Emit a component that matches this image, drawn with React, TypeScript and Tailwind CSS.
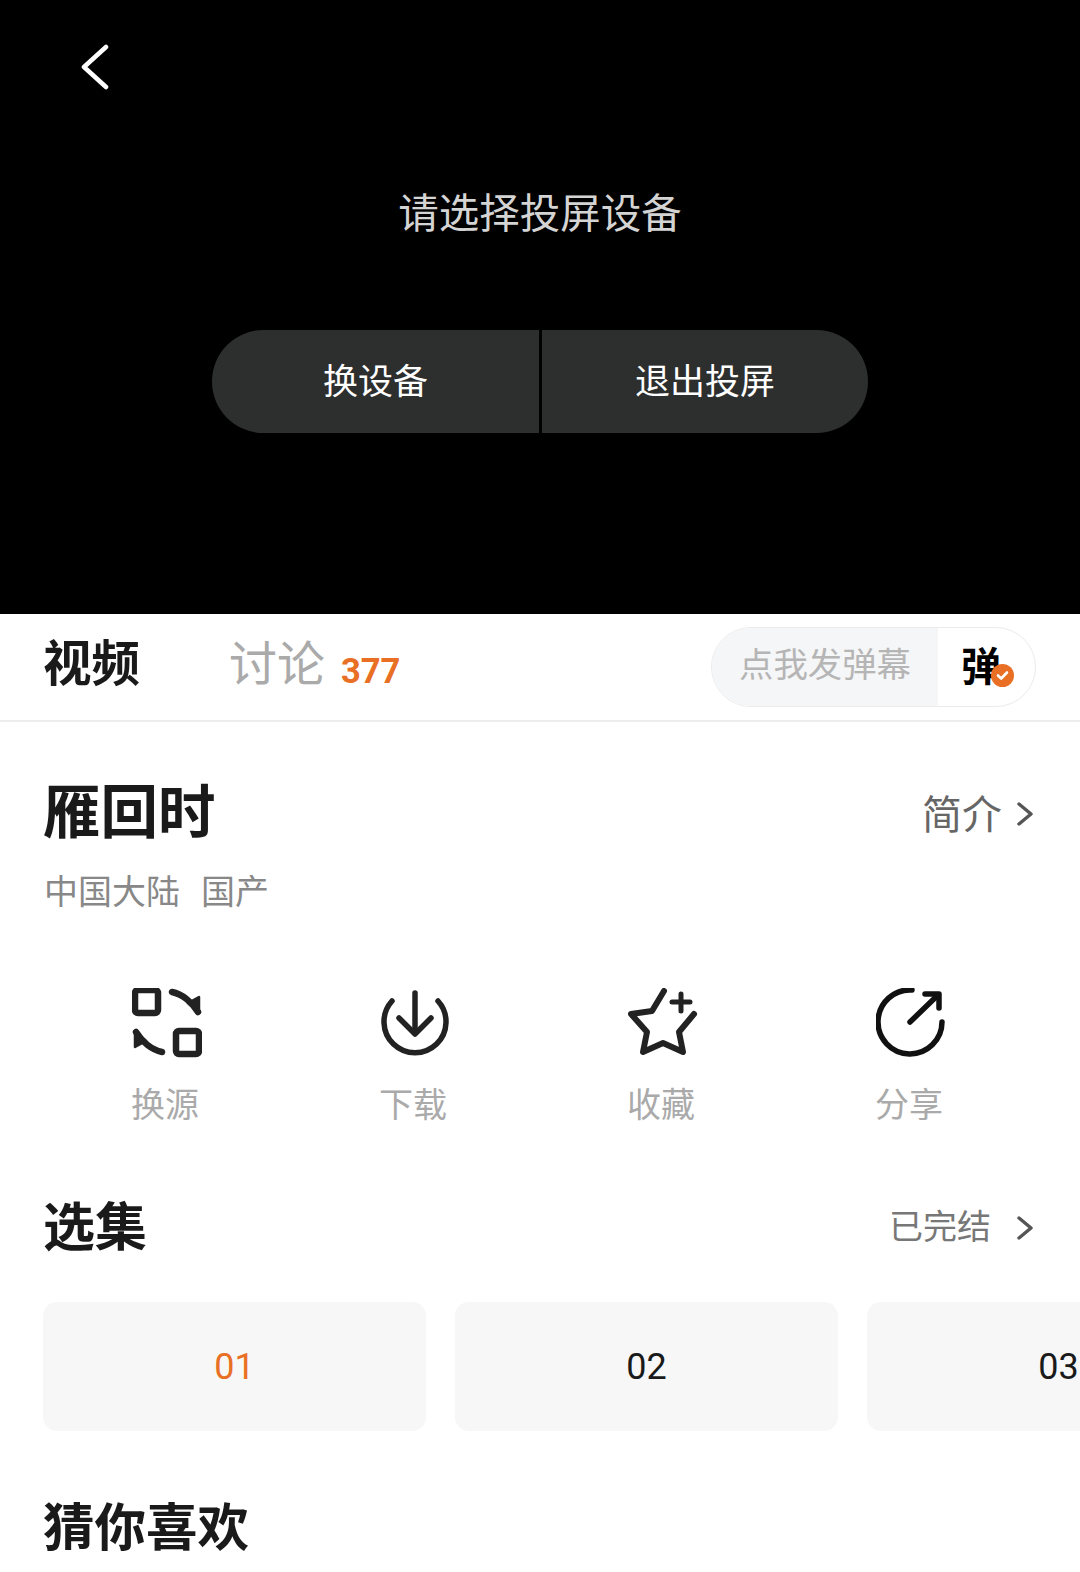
const cjk = "font-['Noto_Sans_CJK_SC','Noto_Sans',sans-serif]";

function Chevron() {
  return (
    <svg width="16" height="24" viewBox="0 0 16 24" fill="none" stroke="#555" strokeWidth="3.4" strokeLinecap="round" strokeLinejoin="round">
      <path d="M2 2 L14 12 L2 22" />
    </svg>
  );
}

function SwapIcon() {
  return (
    <svg width="70" height="70" viewBox="0 1 70 70" fill="none" stroke="#222" strokeWidth="6.5" strokeLinecap="round" strokeLinejoin="round">
      <rect x="3" y="3" width="23" height="23" rx="3" />
      <rect x="44" y="44" width="23" height="23" rx="3" />
      <path d="M40 5 C50 7 60 15 66 25" />
      <path d="M67 10 L67 26 L56 16 Z" fill="#222" strokeWidth="2.5" />
      <path d="M30 65 C20 63 10 55 4 45" />
      <path d="M3 60 L3 44 L14 54 Z" fill="#222" strokeWidth="2.5" />
    </svg>
  );
}

function DownloadIcon() {
  return (
    <svg width="70" height="70" viewBox="0 2 70 70" fill="none" stroke="#222" strokeWidth="5.5" strokeLinecap="round" strokeLinejoin="round">
      <path d="M12 15 A31 31 0 1 0 58 15" />
      <path d="M35 7 L35 47" />
      <path d="M19 32 L35 48 L51 32" />
    </svg>
  );
}

function StarIcon() {
  return (
    <svg width="70" height="70" viewBox="2 3 70 70" fill="none" stroke="#222" strokeWidth="6" strokeLinecap="round" strokeLinejoin="round">
      <path d="M38 6 L26 26 L5 29 L21 47 L17 67 L37 58 L57 67 L53 47 L68 29" />
      <path d="M55 9 L55 26 M46 17 L64 17" strokeWidth="5" />
    </svg>
  );
}

function ShareIcon() {
  return (
    <svg width="70" height="70" viewBox="1 1 70 70" fill="none" stroke="#111" strokeWidth="5.5" strokeLinecap="round" strokeLinejoin="round">
      <path d="M37 3 A32 32 0 1 0 67 35" />
      <path d="M35 35 L63 8" />
      <path d="M50 7 L64 7 L64 21" />
    </svg>
  );
}

const actions = [
  { label: "换源", icon: SwapIcon },
  { label: "下载", icon: DownloadIcon },
  { label: "收藏", icon: StarIcon },
  { label: "分享", icon: ShareIcon },
];

export default function App() {
  return (
    <div className={`w-[1080px] h-[1572px] overflow-hidden bg-white ${cjk}`}>
      {/* Player */}
      <div className="h-[614px] bg-black flex flex-col">
        <div className="pt-[44px] pl-[81px]">
          <svg width="28" height="46" viewBox="0 0 28 46" fill="none" stroke="#fff" strokeWidth="4.5" strokeLinecap="round" strokeLinejoin="round">
            <path d="M25 3 L3 23 L25 43" />
          </svg>
        </div>
        <p className="mt-[91px] text-center text-[40.5px] leading-[60px] text-[#d4d4d4]">请选择投屏设备</p>
        <div className="mt-[89px] mx-auto flex w-[656px] h-[103px]">
          <div className="w-[327px] pb-[5px] rounded-l-full bg-[#2d2e2e] flex items-center justify-center text-[35px] text-white">换设备</div>
          <div className="ml-[3px] pb-[5px] flex-1 rounded-r-full bg-[#2d2e2e] flex items-center justify-center text-[35px] text-white">退出投屏</div>
        </div>
      </div>

      {/* Tabs */}
      <div className="h-[108px] border-b-2 border-[#ececec] flex items-center pl-[43px] pr-[44px]">
        <span className="mb-[14px] text-[48.5px] font-bold text-[#1a1a1a] leading-none">视频</span>
        <span className="ml-[89px] mb-[14px] text-[48px] text-[#aaaaaa] leading-none">讨论</span>
        <span className="ml-[16px] mt-[8px] text-[34.5px] font-bold text-[#e86f24] leading-none font-['Roboto',sans-serif]">377</span>
        <div className="ml-auto flex h-[80px] w-[325px] rounded-full border border-[#ebebeb] overflow-hidden">
          <div className="w-[226px] pb-[9px] bg-[#f5f6f7] pl-[27px] flex items-center text-[34.4px] text-[#b5b5b5]">点我发弹幕</div>
          <div className="relative flex-1 pb-[6px] pl-[23px] flex items-center text-[40px] font-bold text-black">
            弹
            <span className="absolute left-[53px] top-[36px] w-[23px] h-[23px] rounded-full bg-[#e86f24] flex items-center justify-center">
              <svg width="13" height="11" viewBox="0 0 13 11" fill="none" stroke="#fff" strokeWidth="2.6" strokeLinecap="round" strokeLinejoin="round">
                <path d="M2 5.5 L5.2 8.5 L11 2.5" />
              </svg>
            </span>
          </div>
        </div>
      </div>

      {/* Title */}
      <div className="pl-[43px] pr-[44px]">
        <div className="mt-[52px] flex items-center justify-between h-[80px]">
          <h1 className="mb-[11px] text-[57.5px] font-bold text-[#1a1a1a] leading-none">雁回时</h1>
          <div className="flex items-center gap-[15px] pr-[3px]">
            <span className="mb-[4px] text-[40px] text-[#666666] leading-none">简介</span>
            <Chevron />
          </div>
        </div>
        <div className="mt-[16px] pl-[1px] flex gap-[21px] text-[34px] leading-[40px] text-[#888888]">
          <span>中国大陆</span>
          <span>国产</span>
        </div>
      </div>

      {/* Actions */}
      <div className="mt-[78px] pl-[132px] flex">
        {actions.map((a) => (
          <div key={a.label} className="w-[248px] shrink-0 flex flex-col items-start">
            <div className="w-[70px] h-[70px]">
              <a.icon />
            </div>
            <span className="mt-[20px] -ml-[2px] w-[70px] text-center text-[34px] leading-[50px] text-[#aaaaaa]">{a.label}</span>
          </div>
        ))}
      </div>

      {/* Episodes */}
      <div className="mt-[63px] pl-[43px] pr-[47px] flex items-center justify-between h-[66px]">
        <h2 className="text-[52px] font-bold text-[#1a1a1a] leading-none">选集</h2>
        <div className="flex items-center gap-[26px] pt-[8px]">
          <span className="mb-[6px] text-[34px] text-[#777777] leading-none">已完结</span>
          <Chevron />
        </div>
      </div>
      <div className="mt-[45px] pl-[43px] flex gap-[29px] overflow-hidden">
        {["01", "02", "03"].map((n, i) => (
          <div
            key={n}
            className={`shrink-0 w-[383px] h-[129px] rounded-[14px] bg-[#f7f7f7] flex items-center justify-center text-[36px] font-['Roboto',sans-serif] ${
              i === 0 ? "text-[#e86f24]" : "text-[#1a1a1a]"
            }`}
          >
            {n}
          </div>
        ))}
      </div>

      {/* Recommended */}
      <h2 className="mt-[58px] ml-[43px] text-[51.5px] font-bold text-[#1a1a1a] leading-[70px]">猜你喜欢</h2>
    </div>
  );
}
